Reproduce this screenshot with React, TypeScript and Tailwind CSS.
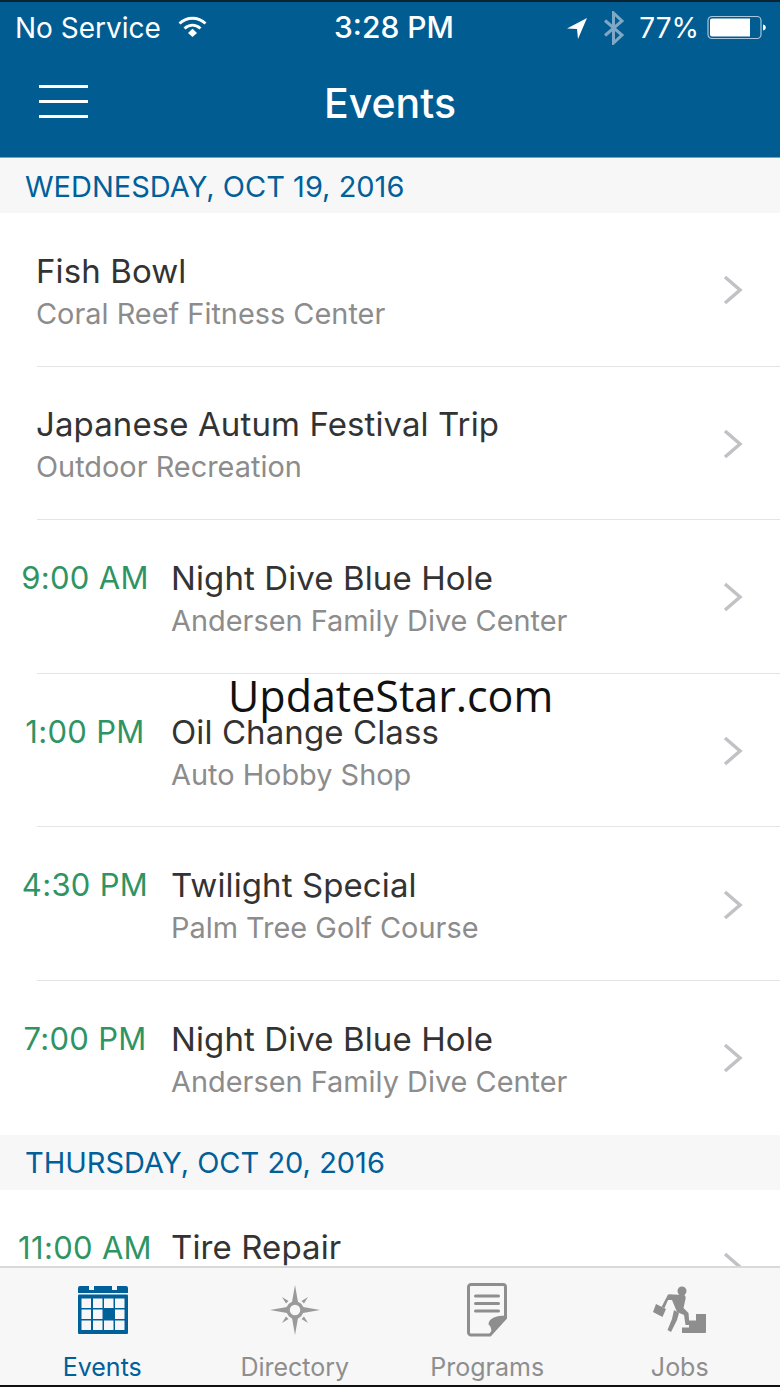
import React from "react";

type EventItem = {
  time?: string;
  title: string;
  place: string;
};

const firstDay: EventItem[] = [
  { title: "Fish Bowl", place: "Coral Reef Fitness Center" },
  { title: "Japanese Autum Festival Trip", place: "Outdoor Recreation" },
  { time: "9:00 AM", title: "Night Dive Blue Hole", place: "Andersen Family Dive Center" },
  { time: "1:00 PM", title: "Oil Change Class", place: "Auto Hobby Shop" },
  { time: "4:30 PM", title: "Twilight Special", place: "Palm Tree Golf Course" },
  { time: "7:00 PM", title: "Night Dive Blue Hole", place: "Andersen Family Dive Center" },
];

const Wifi = () => (
  <svg width="30" height="24" viewBox="0 0 30 24" className="ml-[17px] -mt-[3px]">
    <path d="M1.500 9.500C9 2.500 20 2.500 27.500 9.500" fill="none" stroke="#fff" strokeWidth="3" />
    <path d="M6.500 14.500C11.500 10 17.500 10 22.500 14.500" fill="none" stroke="#fff" strokeWidth="3" />
    <path d="M10 19 L14.500 14.800 L19 19 L14.500 23 Z" fill="#fff" />
  </svg>
);

const Battery = () => (
  <svg width="60" height="26" viewBox="0 0 60 26" className="ml-[8px]">
    <rect x="1" y="1.500" width="53" height="22" rx="4" fill="none" stroke="#a9c7dc" strokeWidth="1.200" />
    <path d="M3 5.500a2 2 0 0 1 2-2H43v18H5a2 2 0 0 1-2-2z" fill="#fff" />
    <path d="M56 9.500c2 .3 2.800 1.500 2.800 3s-.8 2.700-2.800 3z" fill="#fff" />
  </svg>
);

const StatusBar = () => (
  <div className="h-[53px] flex items-center pl-[15px] pr-[13px] pb-[2px] text-white text-[28px] relative">
    <span>No Service</span>
    <Wifi />
    <span className="absolute left-[8px] right-0 text-center text-[30px] font-medium">3:28 PM</span>
    <div className="ml-auto flex items-center">
      <svg width="22" height="24" viewBox="0 0 22 24">
        <path d="M21 2 L1 12.500 L11 13 L12 23 Z" fill="#fff" />
      </svg>
      <svg width="24" height="34" viewBox="0 0 24 34" className="ml-[14px]">
        <path
          d="M3 9.500 L20 24 L11.500 32 V2 L20 10 L3 24.500"
          fill="none"
          stroke="#7fa8c6"
          strokeWidth="3"
        />
      </svg>
      <span className="ml-[13px]">77%</span>
      <Battery />
    </div>
  </div>
);

const Chevron = () => (
  <svg width="22" height="32" viewBox="0 0 22 32" className="shrink-0 mt-[2px]">
    <path d="M3 3 L18 16 L3 29" fill="none" stroke="#c2c2c6" strokeWidth="3.500" />
  </svg>
);

const DayHeader = ({ label }: { label: string }) => (
  <div className="h-[55px] shrink-0 bg-[#f7f7f8] flex items-center pl-[25px] pt-[2px] text-[29px] text-[#00609a]">
    {label}
  </div>
);

const Row = ({ item, last }: { item: EventItem; last?: boolean }) => (
  <div className="shrink-0">
    <div className="h-[152.600px] flex items-center pr-[36px]">
      {item.time ? (
        <div className="w-[170px] shrink-0 text-center text-[31px] tracking-[0.3px] text-[#2f9464] relative -top-[18px]">
          {item.time}
        </div>
      ) : (
        <div className="w-[35px] shrink-0" />
      )}
      <div className="flex-1 min-w-0 pl-px pt-[6px]">
        <div className="text-[33px] tracking-[0.1px] leading-[40px] text-[#333333]">{item.title}</div>
        <div className="text-[28.900px] leading-[40px] mt-[3px] text-[#8c8c8c]">{item.place || "\u00a0"}</div>
      </div>
      <Chevron />
    </div>
    {last ? <div className="h-px" /> : <div className="ml-[37px] h-px bg-[#e4e4e6]" />}
  </div>
);

const calendarCells = [
  [3.5, 12.5], [15, 12.5], [26, 12.5], [37, 12.5],
  [3.5, 23.5], [15, 23.5], [37, 23.5],
  [3.5, 34.5], [15, 34.5], [26, 34.5], [37, 34.5],
];

const CalendarIcon = () => (
  <svg width="50" height="48" viewBox="0 0 50 48" className="ml-[1px]">
    <path d="M0 2a2 2 0 0 1 2-2h9v4h5V0h18v4h5V0h9a2 2 0 0 1 2 2v5H0z" fill="#00609a" />
    <rect x="0" y="8.500" width="50" height="39.500" rx="1" fill="#00609a" />
    {calendarCells.map(([x, y], i) => (
      <rect key={i} x={x} y={y} width="9.500" height="9.500" fill="#f7f7f8" />
    ))}
  </svg>
);

const CompassIcon = () => (
  <svg width="50" height="50" viewBox="0 0 50 50" fill="#9a9a9a">
    <path d="M25 0l-3 17h6zM25 50l-3-17h6zM0 25l17-3v6zM50 25l-17-3v6z" />
    <path d="M12 12l6.500 4 -2.500 2.500zM38 12l-6.500 4 2.500 2.500zM12 38l6.500-4 -2.500-2.500zM38 38l-6.500-4 2.500-2.500z" />
    <circle cx="25" cy="25" r="7" fill="none" stroke="#9a9a9a" strokeWidth="3.500" />
  </svg>
);

const ProgramsIcon = () => (
  <svg width="40" height="54" viewBox="0 0 40 54">
    <path
      d="M4 1.500h32a2.500 2.500 0 0 1 2.500 2.500v31L23 52H4a2.500 2.500 0 0 1-2.500-2.500V4A2.500 2.500 0 0 1 4 1.500z"
      fill="none"
      stroke="#8e8e8e"
      strokeWidth="3"
    />
    <path d="M8.500 13h23M8.500 20.500h23M8.500 28h23" stroke="#8e8e8e" strokeWidth="3" strokeLinecap="round" />
    <path d="M39 32.500 C29 32.500 21.500 35.500 21.500 41.500 C24.500 43.500 25 48 23.500 52 L39 36 Z" fill="#8e8e8e" />
  </svg>
);

const JobsIcon = () => (
  <svg width="54" height="48" viewBox="0 0 54 48" fill="#8e8e8e">
    <circle cx="29" cy="5" r="4.500" />
    <path d="M15 8.500 Q17 8 20 8.500 L31 9 Q33 9.500 32.500 13 L30.500 22 L35.500 27 L36.500 39 L32.500 39 L31 29 L24 26 L19 14 L15 14 L11.500 22 L8.500 21 Z" />
    <path d="M21 24 L26 27 L24 34 L18 46 L14.500 44 L19 33 Z" />
    <path d="M3 18 L13 23 L9.500 31 L0 26 Z" />
    <path d="M29 47 V41.500 H36 V34.500 H43 V28 H53 V46 Q53 47 52 47 Z" />
  </svg>
);

const Tab = ({
  label,
  active,
  icon,
}: {
  label: string;
  active?: boolean;
  icon: React.ReactNode;
}) => (
  <div className="w-[192.500px] flex flex-col items-center">
    <div className="h-[60px] flex items-center justify-center">{icon}</div>
    <div className={`mt-[12px] text-[25px] leading-[30px] ${active ? "text-[#00609a]" : "text-[#8e8e8e]"}`}>
      {label}
    </div>
  </div>
);

export default function App() {
  return (
    <div
      className="relative w-[780px] h-[1387px] overflow-hidden flex flex-col bg-white"
      style={{ fontFamily: "Inter, 'Liberation Sans', sans-serif" }}
    >
      <div className="shrink-0 bg-[#005c91] border-t-2 border-[#0b2233] border-b border-b-[#6fa6c9]">
        <StatusBar />
        <div className="h-[102px] flex items-center relative">
          <div className="ml-[39px] w-[49px] flex flex-col gap-[12px] -mt-[9px]">
            <div className="h-[3px] bg-white" />
            <div className="h-[3px] bg-white" />
            <div className="h-[3px] bg-white" />
          </div>
          <div className="absolute left-0 right-0 -mt-[5px] text-center text-white text-[41px] font-medium">
            Events
          </div>
        </div>
      </div>

      <div className="flex-1 min-h-0 overflow-hidden flex flex-col">
        <DayHeader label="WEDNESDAY, OCT 19, 2016" />
        {firstDay.map((item, i) => (
          <Row key={i} item={item} last={i === firstDay.length - 1} />
        ))}
        <DayHeader label="THURSDAY, OCT 20, 2016" />
        <Row item={{ time: "11:00 AM", title: "Tire Repair", place: "" }} last />
      </div>

      <div className="shrink-0 h-[121px] bg-[#f7f7f8] border-t-2 border-[#d9d9d9] border-b-2 border-b-[#111111] pt-[12px] pl-[6px] flex">
        <Tab label="Events" active icon={<CalendarIcon />} />
        <Tab label="Directory" icon={<CompassIcon />} />
        <Tab label="Programs" icon={<ProgramsIcon />} />
        <Tab label="Jobs" icon={<JobsIcon />} />
      </div>

      <div
        className="absolute left-[228px] top-[669px] text-[43px] leading-[54px] text-[#111111]"
        style={{ fontFamily: "'Open Sans', sans-serif" }}
      >
        UpdateStar.com
      </div>
    </div>
  );
}
